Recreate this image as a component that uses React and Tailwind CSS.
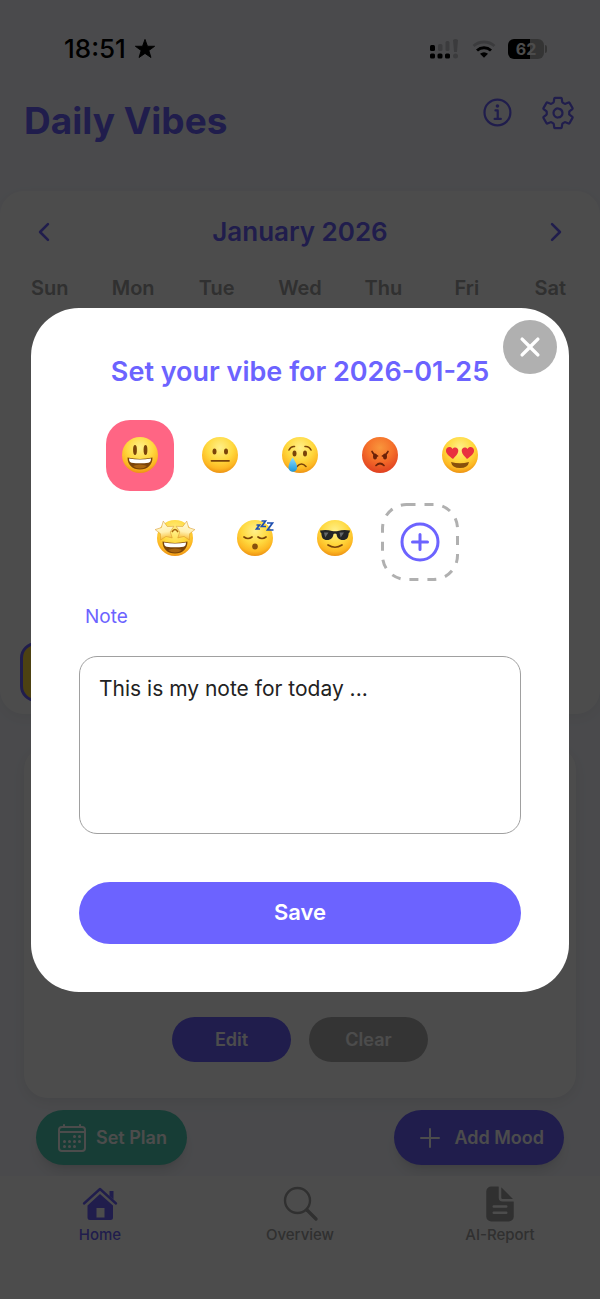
import {
  IoAdd,
  IoAddCircleOutline,
  IoCalendarOutline,
  IoChevronBack,
  IoChevronForward,
  IoClose,
  IoDocumentText,
  IoInformationCircleOutline,
  IoSettingsOutline,
} from 'react-icons/io5'

const weekdays = ['Sun', 'Mon', 'Tue', 'Wed', 'Thu', 'Fri', 'Sat']

function Face({ label, fill = 'url(#face-yellow)', children }) {
  return (
    <svg viewBox="0 0 40 40" className="size-10" role="img" aria-label={label}>
      <circle cx="20" cy="20" r="18" fill={fill} />
      {children}
    </svg>
  )
}

function FaceGradients() {
  return (
    <svg className="absolute size-0" aria-hidden="true">
      <defs>
        <radialGradient id="face-yellow" cx="0.5" cy="0.3" r="0.72">
          <stop offset="0" stopColor="#fff08a" />
          <stop offset="0.5" stopColor="#ffd93f" />
          <stop offset="0.8" stopColor="#fdb823" />
          <stop offset="1" stopColor="#ea8c10" />
        </radialGradient>
        <radialGradient id="face-red" cx="0.5" cy="0.3" r="0.72">
          <stop offset="0" stopColor="#f8963c" />
          <stop offset="0.5" stopColor="#f5702a" />
          <stop offset="1" stopColor="#df3d20" />
        </radialGradient>
        <linearGradient id="tear" x1="0" y1="0" x2="0" y2="1">
          <stop offset="0" stopColor="#8bdcff" />
          <stop offset="1" stopColor="#1b96d8" />
        </linearGradient>
        <linearGradient id="star" x1="0" y1="0" x2="0" y2="1">
          <stop offset="0" stopColor="#fffbe0" />
          <stop offset="0.6" stopColor="#fff0b0" />
          <stop offset="1" stopColor="#f8bd35" />
        </linearGradient>
      </defs>
    </svg>
  )
}

function Grin({ y = 0 }) {
  return (
    <g transform={`translate(0 ${y})`}>
      <path d="M7.500 22.500q12.500 2.800 25 0c0 7.500-5 12-12.500 12S7.500 30 7.500 22.500z" fill="#7a4409" />
      <path d="M9 23.500q11 2.200 22 0c0 2.600-1 4-2.500 4.200q-8.500 1.100-17 0C10 27.500 9 26 9 23.500z" fill="#fff" />
      <path d="M13 31q7-3 14 0-3 2.500-7 2.500t-7-2.500z" fill="#a8650f" />
    </g>
  )
}

function HappyFace() {
  return (
    <Face label="Happy">
      <ellipse cx="15" cy="15" rx="1.900" ry="5" fill="#7a4409" />
      <ellipse cx="25.500" cy="15" rx="1.900" ry="5" fill="#7a4409" />
      <Grin />
    </Face>
  )
}

function NeutralFace() {
  return (
    <Face label="Neutral">
      <ellipse cx="14.500" cy="16.500" rx="2" ry="3" fill="#7a4409" />
      <ellipse cx="26" cy="16.500" rx="2" ry="3" fill="#7a4409" />
      <path d="M11.500 25.800h17.500" stroke="#7a4409" strokeWidth="1.800" strokeLinecap="round" />
    </Face>
  )
}

function SadFace() {
  return (
    <Face label="Sad">
      <ellipse cx="14.500" cy="18.500" rx="2" ry="3" fill="#7a4409" />
      <ellipse cx="25" cy="18.500" rx="2" ry="3" fill="#7a4409" />
      <path d="M9 15q2-4 5.500-3.500M25 11.500q4-.5 6 3.500M17 31.500q4.500-5 9 0" fill="none" stroke="#7a4409" strokeWidth="1.600" strokeLinecap="round" />
      <path d="M12.500 22.500q-4 6-4 10a4.300 4.300 0 0 0 8.600 0q0-4-4.600-10z" fill="url(#tear)" />
    </Face>
  )
}

function AngryFace() {
  return (
    <Face label="Angry" fill="url(#face-red)">
      <ellipse cx="15" cy="21.500" rx="2" ry="3" fill="#6b2208" />
      <ellipse cx="25" cy="21.500" rx="2" ry="3" fill="#6b2208" />
      <path d="M12 16.500q1.500 3.500 5.500 4.500M28 16.500q-1.500 3.500-5.500 4.500M16 30.500q4-4 8 0" fill="none" stroke="#6b2208" strokeWidth="1.700" strokeLinecap="round" />
    </Face>
  )
}

function LoveFace() {
  return (
    <Face label="Love">
      <path d="M13 24C9 21 5.500 18.500 6 15c.5-3.500 5-4 6.500-1 2-2.800 6-1.500 5.800 2-.3 3-3 5.500-5.300 8z" fill="#e9313f" />
      <path d="M27 24c4-3 7.500-5.500 7-9-.5-3.500-5-4-6.500-1-2-2.800-6-1.500-5.800 2 .3 3 3 5.500 5.300 8z" fill="#e9313f" />
      <path d="M11 27q9 2.500 18 0-1 6-9 6t-9-6z" fill="#87500c" />
    </Face>
  )
}

function StarFace() {
  const star = 'M0-10L3-4 9.500-3.100 5 1.800 5.900 8.100 0 5.500-5.900 8.100-5 1.800-9.500-3.100-3-4z'
  return (
    <Face label="Excited">
      <path d="M17 14q3-5 6 0" fill="none" stroke="#a8650f" strokeWidth="1.500" />
      <Grin y={1} />
      <g fill="url(#star)" stroke="#d8962c" strokeWidth="0.500" strokeLinejoin="round">
        <path d={star} transform="translate(10 13) rotate(-10)" />
        <path d={star} transform="translate(30 13) rotate(10)" />
      </g>
    </Face>
  )
}

function SleepyFace() {
  return (
    <Face label="Sleepy">
      <path d="M9 19q4 3 8 0M23 19q4 3 8 0" fill="none" stroke="#7a4409" strokeWidth="1.700" strokeLinecap="round" />
      <ellipse cx="20" cy="28.500" rx="2.800" ry="3" fill="#87500c" />
      <path d="M21.500 7h3l-3 4h3.500M26.500 3h4l-4 5.500h4.500M32 5h5.500l-5 7h6" fill="none" stroke="#1f4fb0" strokeWidth="1.700" />
    </Face>
  )
}

function CoolFace() {
  return (
    <Face label="Cool">
      <path d="M5 12.500q7-1 12 .500 3 .600 6 0 5-1.500 12-.5l-.5 2-.8.5c-.3 5-2 7-5.700 7-4.300 0-6-2.500-6.500-6q-1.500-1.200-3 0c-.5 3.500-2.200 6-6.500 6-3.700 0-5.400-2-5.700-7l-.8-.5z" fill="#242526" />
      <path d="M9 14.500h4.500l-3.300 5zM24.500 14.500h4.500l-3.300 5z" fill="#66696b" />
      <path d="M13 27q7 4.500 14 0" fill="none" stroke="#7a4409" strokeWidth="1.700" strokeLinecap="round" />
    </Face>
  )
}

const moods = [HappyFace, NeutralFace, SadFace, AngryFace, LoveFace, StarFace, SleepyFace, CoolFace]

function HomeIcon() {
  return (
    <svg viewBox="0 0 40 40" className="size-10" aria-hidden="true">
      <path d="M4 19.500L20 5 36 19.500" fill="none" stroke="currentColor" strokeWidth="2.400" strokeLinecap="round" strokeLinejoin="round" />
      <path d="M29.500 7h4v8.500l-4-3.500z" fill="currentColor" />
      <path
        d="M20 10L33 21.500V33.500a2.500 2.500 0 0 1-2.500 2.500H10a2.500 2.500 0 0 1-2.500-2.500V21.500zM16.500 24v9.500h8V24z"
        fill="currentColor"
        fillRule="evenodd"
      />
    </svg>
  )
}

function SearchIcon() {
  return (
    <svg viewBox="0 0 40 40" className="size-10" fill="none" stroke="currentColor" strokeLinecap="round" aria-hidden="true">
      <circle cx="17.500" cy="16.500" r="12.500" strokeWidth="2.400" />
      <path d="M27 26l9 9" strokeWidth="3.400" />
    </svg>
  )
}

function StatusBar() {
  return (
    <div className="flex items-center justify-between px-[53px] pt-[33px] text-black">
      <div className="flex items-center gap-2 pl-[11px]">
        <span className="text-[26px] leading-8 font-medium">18:51</span>
        <svg viewBox="0 0 24 24" className="size-[22px]" fill="currentColor" stroke="currentColor" strokeLinejoin="round" aria-hidden="true">
          <path d="M12 1.500l2.700 7.500h7.800l-6.300 4.700 2.300 7.600L12 16.800l-6.500 4.500 2.300-7.600L1.500 9h7.800z" />
        </svg>
      </div>
      <div className="flex items-center gap-3">
        <svg viewBox="0 0 30 22" className="h-[22px] w-[30px]" fill="currentColor" aria-hidden="true">
          <rect x="0" y="7" width="5" height="6" rx="1.500" />
          <rect x="0" y="15.500" width="5" height="5" rx="1.500" />
          <rect x="7.500" y="15.500" width="5" height="5" rx="1.500" />
          <rect x="15" y="15.500" width="5" height="5" rx="1.500" />
          <g opacity="0.200">
            <rect x="8" y="6" width="4.500" height="7" rx="1.500" />
            <rect x="15.500" y="3" width="4" height="10" rx="1.500" />
            <path d="M23 2q2.500-2 5 0l-1 12h-3z" />
            <circle cx="25.500" cy="18" r="2.500" />
          </g>
        </svg>
        <svg viewBox="0 0 24 20" className="h-5 w-6" fill="none" stroke="currentColor" strokeWidth="3" aria-hidden="true">
          <path d="M1.500 7a15.500 15.500 0 0 1 21 0" opacity="0.200" />
          <path d="M5 11.500a10.500 10.500 0 0 1 14 0" />
          <path d="M12 18.800l-4-4q4-3.200 8 0z" fill="currentColor" stroke="none" />
        </svg>
        <div className="flex items-center gap-px">
          <div className="flex h-5 w-9 items-center justify-center rounded-md bg-linear-to-r from-black from-62% to-[#b0b0b0] to-62% text-base font-bold text-white">
            62
          </div>
          <div className="h-2 w-0.5 rounded-r bg-[#b0b0b0]" />
        </div>
      </div>
    </div>
  )
}

function Header() {
  return (
    <header className="flex items-start justify-between px-6 pt-[30px] text-[#6c63ff]">
      <h1 className="pt-0.5 text-[37px] leading-12 font-bold">Daily Vibes</h1>
      <div className="flex items-center gap-6">
        <button aria-label="Info"><IoInformationCircleOutline className="size-9" /></button>
        <button aria-label="Settings"><IoSettingsOutline className="size-9" /></button>
      </div>
    </header>
  )
}

function Calendar() {
  return (
    <section className="mt-[46px] rounded-3xl bg-white px-2 pt-[25px] pb-3 shadow-[0_4px_16px_rgba(0,0,0,0.06)]">
      <div className="flex items-center justify-between px-[22px] text-[#6c63ff]">
        <button aria-label="Previous month"><IoChevronBack className="size-7" /></button>
        <h2 className="text-[26px] leading-8 font-semibold">January 2026</h2>
        <button aria-label="Next month"><IoChevronForward className="size-7" /></button>
      </div>
      <div className="mt-6 grid grid-cols-7 text-center text-xl leading-8 font-semibold text-[#a0a0a0]">
        {weekdays.map((day) => (
          <span key={day}>{day}</span>
        ))}
      </div>
      <div className="mt-[338px] grid grid-cols-7 justify-items-center">
        <button aria-label="January 25" className="size-[60px] rounded-2xl border-3 border-[#6c63ff] bg-[#ffd93d]" />
      </div>
    </section>
  )
}

function DayCard() {
  return (
    <section className="mx-6 mt-8 flex flex-1 items-end justify-center gap-[18px] rounded-3xl bg-white pb-9 text-lg font-semibold text-white shadow-[0_4px_16px_rgba(0,0,0,0.08)]">
      <button className="h-[45px] w-[119px] rounded-full bg-[#6c63ff]">Edit</button>
      <button className="h-[45px] w-[119px] rounded-full bg-[#b0b0b0]">Clear</button>
    </section>
  )
}

function Actions() {
  return (
    <div className="flex justify-between px-9 pt-3 pb-[11px] text-lg font-semibold text-white">
      <button className="flex h-[55px] items-center gap-2 rounded-full bg-[#4ecdb4] px-5 shadow-lg">
        <IoCalendarOutline className="size-8" />
        Set Plan
      </button>
      <button className="flex h-[55px] items-center gap-2 rounded-full bg-[#6c63ff] px-5 shadow-lg">
        <IoAdd className="size-8" />
        Add Mood
      </button>
    </div>
  )
}

function TabBar() {
  return (
    <nav className="grid h-[123px] grid-cols-3 items-start bg-white pt-2 text-[15px] leading-5 font-medium text-[#a0a0a0]">
      <a href="#home" className="flex flex-col items-center gap-px text-[#6c63ff]">
        <HomeIcon />
        Home
      </a>
      <a href="#overview" className="flex flex-col items-center gap-px">
        <SearchIcon />
        Overview
      </a>
      <a href="#report" className="flex flex-col items-center gap-px">
        <IoDocumentText className="size-10" />
        AI-Report
      </a>
    </nav>
  )
}

function VibeDialog() {
  return (
    <div className="fixed inset-0 flex items-center justify-center bg-black/70 px-[31px]">
      <div role="dialog" aria-modal="true" aria-labelledby="vibe-title" className="relative flex w-full max-w-xl flex-col rounded-[48px] bg-white p-12">
        <button aria-label="Close" className="absolute top-3 right-3 flex size-[54px] items-center justify-center rounded-full bg-[#b0b0b0] text-white">
          <IoClose className="size-9" />
        </button>
        <h2 id="vibe-title" className="text-center text-[27px] leading-8 font-semibold text-[#6c63ff]">
          Set your vibe for 2026-01-25
        </h2>
        <div className="mt-8 flex flex-wrap items-start justify-center gap-3">
          {moods.map((Mood, i) => (
            <button key={i} className={`flex h-[71px] w-[68px] items-center justify-center rounded-3xl ${i === 0 ? 'bg-[#ff6584]' : ''}`}>
              <Mood />
            </button>
          ))}
          <button aria-label="Add vibe" className="relative flex size-[78px] items-center justify-center text-[#6c63ff]">
            <svg viewBox="0 0 78 78" className="absolute inset-0" fill="none" stroke="#b0b0b0" strokeWidth="3" strokeDasharray="9 9" aria-hidden="true">
              <rect x="1.500" y="1.500" width="75" height="75" rx="24" />
            </svg>
            <IoAddCircleOutline className="size-12" />
          </button>
        </div>
        <label htmlFor="note" className="mt-6 px-1.5 text-[19px] leading-6 text-[#6c63ff]">Note</label>
        <textarea
          id="note"
          defaultValue="This is my note for today ..."
          className="mt-[27px] h-[178px] resize-none rounded-[18px] border border-[#a0a0a0] px-[19px] py-4 text-[21px] leading-8 text-[#222] outline-none"
        />
        <button className="mt-12 h-[62px] rounded-full bg-[#6c63ff] text-[22px] font-semibold text-white">Save</button>
      </div>
    </div>
  )
}

function App() {
  return (
    <div className="flex min-h-screen flex-col bg-[#f8f9ff] font-['Inter',sans-serif]">
      <FaceGradients />
      <StatusBar />
      <Header />
      <Calendar />
      <DayCard />
      <Actions />
      <TabBar />
      <VibeDialog />
    </div>
  )
}

export default App
